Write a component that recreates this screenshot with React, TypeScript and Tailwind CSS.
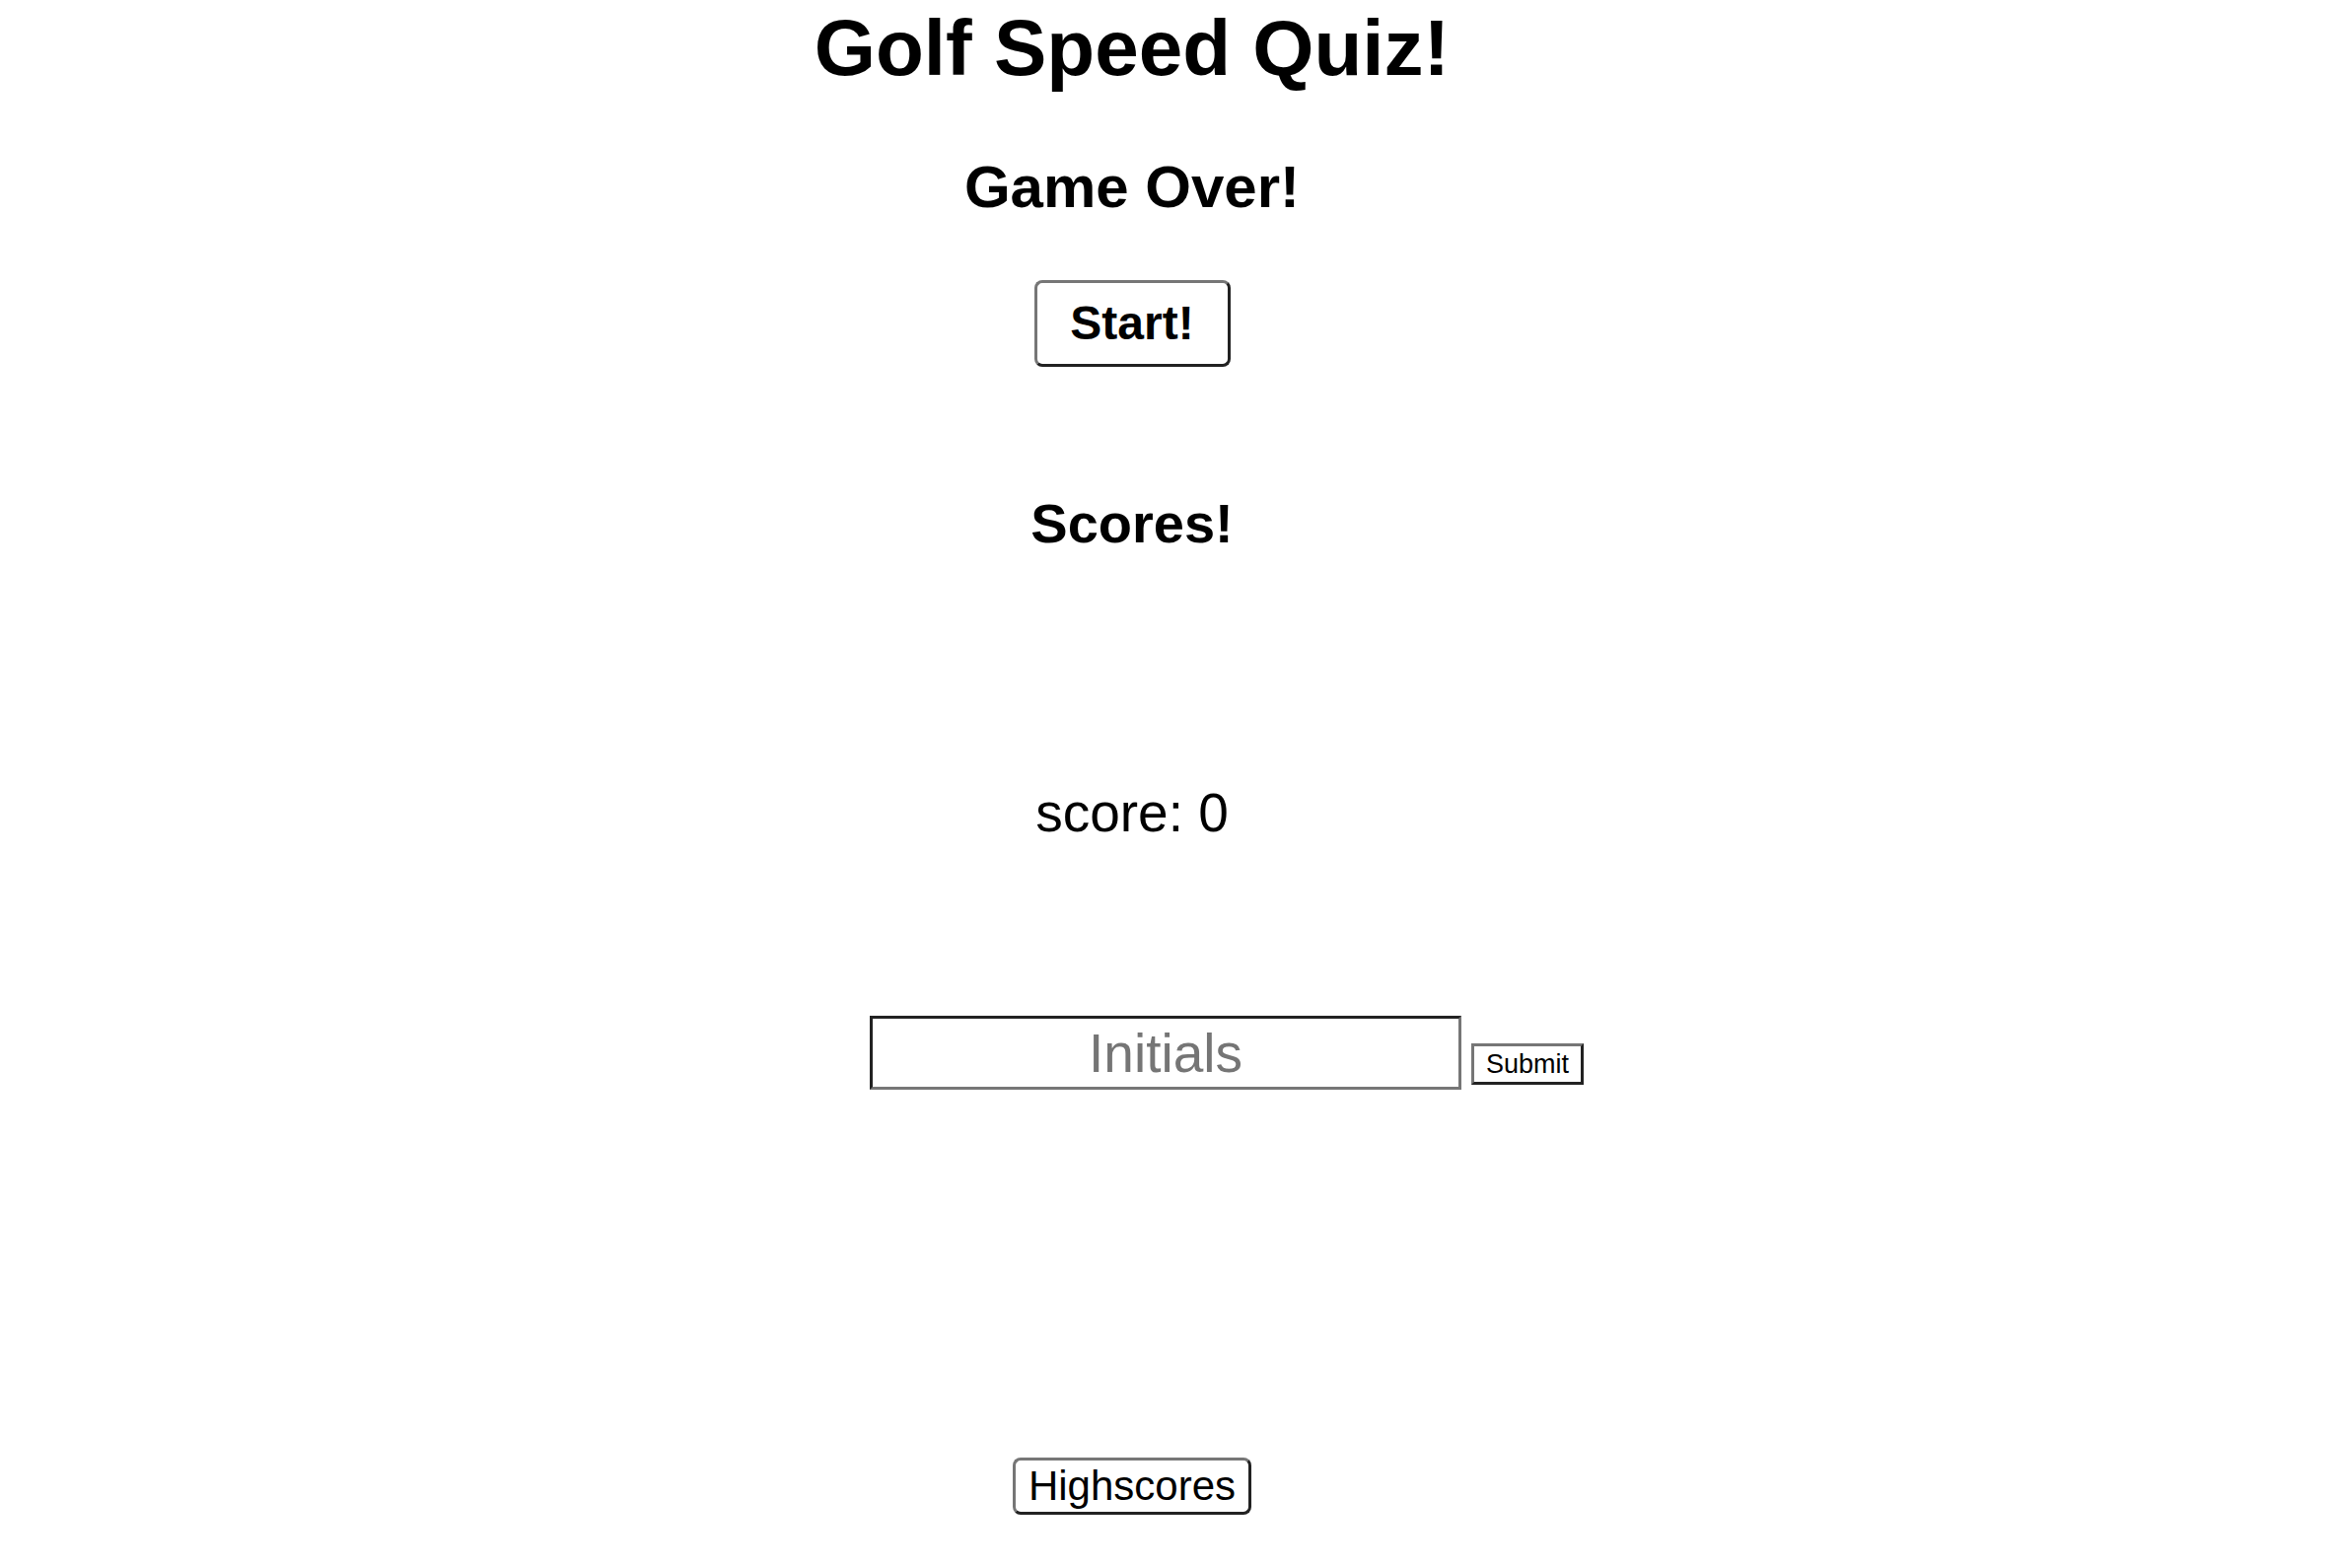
import { FC } from "react";

const App: FC = () => {
  return (
    <div className="w-[2296px] h-[1590px] overflow-hidden bg-white text-black font-['Liberation_Sans',Arial,sans-serif] flex flex-col items-center">
      <h1 className="mt-[9px] text-[80px] leading-none font-bold">Golf Speed Quiz!</h1>
      <h2 className="mt-[71px] text-[60px] leading-none font-bold">Game Over!</h2>
      <button className="mt-[64px] w-[199px] h-[88px] rounded-[8px] border-[3px] border-t-[#767676] border-l-[#767676] border-r-[#222222] border-b-[#222222] bg-white text-[48px] leading-none font-bold">
        Start!
      </button>
      <h3 className="mt-[131px] text-[56px] leading-none font-bold">Scores!</h3>
      <div className="mt-[238px] text-[55px] leading-none">score: 0</div>
      <div className="mt-[178px] w-full flex justify-center items-end gap-[10px] pl-[192px]">
        <input
          type="text"
          placeholder="Initials"
          className="w-[600px] h-[75px] border-[3px] border-t-[#222222] border-l-[#222222] border-r-[#767676] border-b-[#767676] text-center text-[55px] leading-none placeholder:text-[#757575] outline-none"
        />
        <button className="mb-[5px] w-[114px] h-[42px] border-[3px] border-t-[#767676] border-l-[#767676] border-r-[#222222] border-b-[#222222] bg-white text-[27px] leading-none">
          Submit
        </button>
      </div>
      <button className="mt-[373px] w-[242px] h-[58px] rounded-[8px] border-[3px] border-t-[#767676] border-l-[#767676] border-r-[#222222] border-b-[#222222] bg-white text-[42px] leading-none">
        Highscores
      </button>
    </div>
  );
};

export default App;
